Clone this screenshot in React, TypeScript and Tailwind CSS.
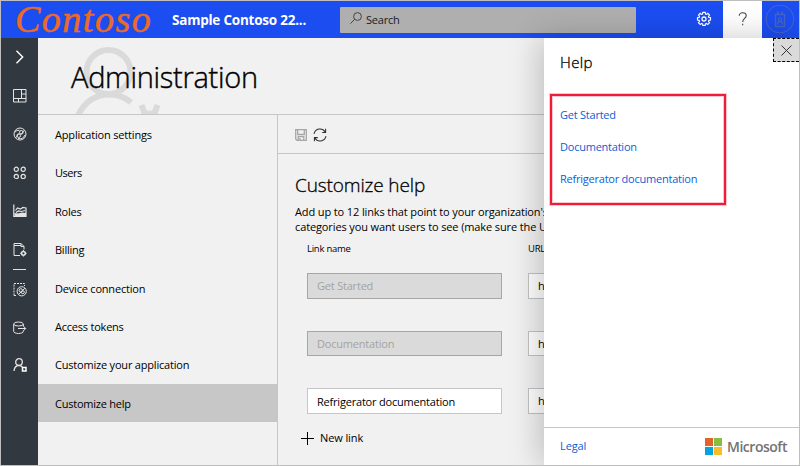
import React from "react";

const navItems = [
  { label: "Application settings", track: "tracking-[-0.17px]" },
  { label: "Users", track: "tracking-[-0.5px]" },
  { label: "Roles", track: "tracking-[-0.2px]" },
  { label: "Billing", track: "tracking-[-0.25px]" },
  { label: "Device connection", track: "tracking-[-0.2px]" },
  { label: "Access tokens", track: "tracking-[-0.22px]" },
  { label: "Customize your application", track: "tracking-[-0.2px]" },
  { label: "Customize help", track: "tracking-[-0.23px]" },
];

const rows = [
  { name: "Get Started", locked: true },
  { name: "Documentation", locked: true },
  { name: "Refrigerator documentation", locked: false },
];

function Stroke({ children, size = 14, className = "" }: { children: React.ReactNode; size?: number; className?: string }) {
  return (
    <svg width={size} height={size} viewBox={`0 0 ${size} ${size}`} fill="none" stroke="currentColor" strokeWidth="1" className={className}>
      {children}
    </svg>
  );
}

function Sidebar() {
  return (
    <nav className="flex w-[37px] shrink-0 flex-col items-center bg-[#32383f] text-[#e4e4e4]">
      <div className="flex h-[38px] items-center">
        <Stroke>
          <path d="M3.500 .8 9.700 7 3.500 13.200" strokeWidth="1.400" stroke="#fff" />
        </Stroke>
      </div>
      <div className="flex h-[39px] items-center">
        <Stroke>
          <path d="M.5 .5h12.500v12.500H.5zM.5 9.500h12.500M8.500 .5v9M8.500 5h4.500M5.500 9.500v3.500" />
        </Stroke>
      </div>
      <div className="flex h-[38px] items-center">
        <Stroke>
          <circle cx="7" cy="7" r="6" />
          <path d="M2.500 11 6.200 6.300M11.500 3 7.800 7.700M2 5A5 5 0 0 1 6.500 3.200M5 11.500A6 6 0 0 0 12 8" />
          <circle cx="8.300" cy="5.300" r="1.800" />
          <circle cx="5.700" cy="8.700" r="1.800" />
        </Stroke>
      </div>
      <div className="flex h-[39px] items-center">
        <Stroke>
          <circle cx="3.300" cy="3.300" r="2.100" strokeWidth="1.200" />
          <circle cx="10.200" cy="3.300" r="2.100" strokeWidth="1.200" />
          <circle cx="3.300" cy="10.400" r="2.100" strokeWidth="1.200" />
          <circle cx="10.200" cy="10.400" r="2.100" strokeWidth="1.200" />
        </Stroke>
      </div>
      <div className="flex h-[38px] items-center">
        <Stroke>
          <path d="M.8 .5v12h12.200V3.500M2.500 6.500l2-2.500 3 1 2.500-1.500 3 .5M3 8.500l2.500-1.500 3 .5 3.500-1" strokeWidth="1.200" />
          <path d="M1.500 12.500V9l3.500.5 4-1 4 .5v3.500z" fill="currentColor" stroke="none" />
        </Stroke>
      </div>
      <div className="flex h-[39px] items-center">
        <Stroke>
          <path d="M7 12.500H1V.5h7l3 3v3M8 .5v3h3M1 2.500h7" />
          <circle cx="10.400" cy="10.300" r="1.900" strokeWidth="1.500" />
          <path d="M10.400 7v6.600M7.100 10.300h6.600" strokeDasharray="1.200 4.200" />
        </Stroke>
      </div>
      <div className="h-px w-[13px] bg-[#e0e0e0]" />
      <div className="flex h-[39px] items-center">
        <Stroke>
          <path d="M1 12.500V.5h10.500v2.500M1 12.500h3" strokeDasharray="2 1" />
          <circle cx="8.700" cy="8.300" r="4.600" />
          <path d="m5.500 11.400 6.400-6.200" />
          <circle cx="7.800" cy="7.400" r="1.700" />
          <circle cx="9.800" cy="9.200" r="1.500" />
        </Stroke>
      </div>
      <div className="flex h-[37px] items-center">
        <Stroke>
          <ellipse cx="5.500" cy="3" rx="4.800" ry="2" />
          <path d="M.7 3v7.500c0 1.100 2.100 2 4.800 2s4.800-.9 4.800-2v-.6M10.300 3v2M5 7.500h7.700M10 4.800l2.700 2.700-2.700 2.700" />
        </Stroke>
      </div>
      <div className="flex h-[38px] items-center">
        <Stroke>
          <circle cx="6" cy="4" r="3.300" strokeWidth="1.300" />
          <path d="M1 13c.3-3.400 2-5.500 5-5.500 1.500 0 2.500.5 3.300 1.500" strokeWidth="1.300" />
          <path d="M9.500 9.500h3.500v3.500H9.500z" strokeWidth="1.500" stroke="#fff" />
        </Stroke>
      </div>
    </nav>
  );
}

function Header() {
  return (
    <header className="flex h-[37px] shrink-0 items-center bg-[#1b4df1]">
      <div className="w-[171px] pl-[14px] font-['Liberation_Serif',serif] text-[38px] leading-[37px] tracking-[1.500px] text-[#ed6a25] italic [-webkit-text-stroke:0.5px_#ed6a25]">
        Contoso
      </div>
      <div className="w-[168px] pt-[2px] text-[13.500px] font-bold tracking-[-0.230px] whitespace-nowrap text-white">
        Sample Contoso 22...
      </div>
      <div className="flex h-[26px] w-[296px] items-center rounded-[1px] bg-[#afafaf] pt-px pl-[10px] text-[11px] tracking-[-0.200px] text-[#1c1c1c]">
        <Stroke size={12} className="mr-[4px] mb-[4px] text-[#444]">
          <circle cx="7.500" cy="4.500" r="3.900" />
          <path d="M4.700 7.300.4 11.600" />
        </Stroke>
        Search
      </div>
      <svg width="16" height="16" viewBox="-8 -8 16 16" fill="none" stroke="#fff" strokeWidth="1.300" className="mb-[2px] ml-[60px]">
        <circle r="2" />
        <path d="M-1.200-6h2.400l.3 1.600 .9.400 1.400-1 1.700 1.700-1 1.400.4.900 1.600.3v2.400l-1.600.3-.4.900 1 1.400-1.700 1.700-1.400-1-.9.400-.3 1.600h-2.400l-.3-1.600-.9-.4-1.400 1-1.700-1.700 1-1.400-.4-.9-1.600-.3v-2.400l1.600-.3.400-.9-1-1.400 1.700-1.700 1.400 1 .9-.4z" transform="translate(0 -.6)" strokeWidth="1.200" />
      </svg>
      <div className="ml-[11px] flex h-[37px] w-[39px] items-center justify-center bg-white">
        <svg width="10" height="14" viewBox="0 0 10 14" fill="none" stroke="#444" strokeWidth="1.100" className="mb-[2px]">
          <path d="M1.200 3.800C1.200 2 2.700.8 4.700.8s3.500 1.100 3.500 2.900C8.200 6.400 4.700 6.600 4.700 10M4.700 11.800v1.400" />
        </svg>
      </div>
      <svg width="30" height="30" viewBox="0 0 30 30" fill="none" stroke="#4663c4" strokeWidth="1.100" className="mb-[2px] ml-[3px]">
        <circle cx="15" cy="15" r="13.700" />
        <path d="M10.500 10.500h9v12h-9zM12.500 7.500l1 3M17.500 7.500l-1 3M12.500 20.500c0-4 5-4 5 0" strokeWidth="1.500" />
        <circle cx="15" cy="15.500" r="1.600" />
      </svg>
    </header>
  );
}

function Title() {
  return (
    <div className="relative h-[77px] shrink-0 overflow-hidden border-b border-[#c6c6c6]">
      <svg width="140" height="76" viewBox="38 38 140 76" fill="none" stroke="#dadada" strokeWidth="6" className="absolute top-0 left-0">
        <circle cx="108.500" cy="72" r="22" />
        <path d="M77 119A33.500 33.500 0 0 1 131 102.500" />
        <path d="m141.500 105 3 8M157.500 105l-3 8" />
        <path d="M139 124a10.500 10.500 0 0 1 21 0" />
      </svg>
      <h1 className="relative pt-[19px] pl-[33px] text-[29px] leading-[40px] font-light tracking-[-0.280px] [-webkit-text-stroke:0.4px_black]">
        Administration
      </h1>
    </div>
  );
}

function HelpForm() {
  return (
    <main className="min-w-0 flex-1 overflow-hidden">
      <div className="flex h-[39px] items-center border-b border-[#c6c6c6] pt-[2px] pl-[17px]">
        <Stroke size={12} className="text-[#a6a6a6]">
          <path d="M.7 .7h10.600v10.600H2L.7 10zM2.700 1v4.500h6.600V1M3.200 11V7.700h5.600V11M5 9v2" strokeWidth="1.300" />
        </Stroke>
        <Stroke size={14} className="ml-[6px] text-[#333]">
          <path d="M1 5.800A6.100 6.100 0 0 1 12.200 4M13 8.200A6.100 6.100 0 0 1 1.800 10M12.600 .8v3.600H9.200M1.400 13.200V9.600h3.400" strokeWidth="1.050" />
        </Stroke>
      </div>
      <div className="w-[520px] pl-[17px]">
        <h2 className="mt-[18px] text-[19px] leading-[26px] font-light tracking-[-0.120px] [-webkit-text-stroke:0.3px_black]">Customize help</h2>
        <div className="mt-[6px] text-[11px] leading-[15px] tracking-[-0.120px] whitespace-nowrap">
          <p>Add up to 12 links that point to your organization's</p>
          <p>categories you want users to see (make sure the URLs</p>
        </div>
        <div className="mt-[8px] flex text-[9.500px] leading-[14px] tracking-[-0.250px]">
          <span className="w-[233px] pl-[12px]">Link name</span>
          <span>URL</span>
        </div>
        <div className="mt-[17px] flex flex-col gap-[32px] pl-[12px] text-[11px] tracking-[-0.2px]">
          {rows.map((row) => (
            <div key={row.name} className="flex h-[25.700px] gap-[26px]">
              <div
                className={
                  row.locked
                    ? "flex w-[195px] items-center border border-[#a6a6a6] bg-[#dadada] pt-px pl-[9px] text-[#a3a3a3]"
                    : "flex w-[195px] items-center border border-[#c6c6c6] bg-white pt-[2px] pl-[9px]"
                }
              >
                {row.name}
              </div>
              <div className="flex w-[195px] items-center border border-[#c2c2c2] bg-white pt-px pl-[9px]">https://docs.microsoft.com</div>
            </div>
          ))}
        </div>
        <div className="mt-[15px] flex items-center pl-[6px] text-[11px] leading-[18px] tracking-[-0.1px]">
          <Stroke size={13} className="mr-[6px]">
            <path d="M6.500 0v13M0 6.500h13" />
          </Stroke>
          New link
        </div>
      </div>
    </main>
  );
}

function HelpPanel() {
  return (
    <aside className="absolute top-[37px] right-0 bottom-0 flex w-[255px] flex-col bg-white shadow-[-4px_0_30px_rgba(0,0,0,0.22)]">
      <div className="flex h-[56px] justify-between pl-[16px]">
        <h3 className="pt-[14px] text-[15px] leading-[20px] font-light tracking-[0.350px] [-webkit-text-stroke:0.3px_black]">Help</h3>
        <button className="flex h-[24px] w-[26px] items-center justify-center border border-r-0 border-dashed border-black bg-[#dadada]">
          <Stroke size={11} className="text-[#333]">
            <path d="m.5.5 10 10M10.500.5l-10 10" />
          </Stroke>
        </button>
      </div>
      <div className="ml-[6px] flex h-[111px] w-[176px] flex-col border-2 border-[#ef1c3a] pt-[3px] pl-[8px] text-[11px] leading-[32px] tracking-[-0.230px] text-[#0a60d6] shadow-[0_0_0_1px_#f9c6cd,inset_0_0_0_1px_#f9c6cd]">
        <a>Get Started</a>
        <a>Documentation</a>
        <a>Refrigerator documentation</a>
      </div>
      <div className="mt-auto flex h-[38px] items-center justify-between border-t border-[#c6c6c6] pr-[12px] pl-[16px]">
        <a className="text-[11px] tracking-[-0.1px] text-[#0a60d6]">Legal</a>
        <div className="flex items-center gap-[5px]">
          <div className="grid grid-cols-2 gap-px">
            <span className="size-2 bg-[#e2622b]" />
            <span className="size-2 bg-[#86bf40]" />
            <span className="size-2 bg-[#05a3de]" />
            <span className="size-2 bg-[#fabd27]" />
          </div>
          <span className="text-[14px] font-semibold tracking-[-0.480px] text-[#737373]">Microsoft</span>
        </div>
      </div>
    </aside>
  );
}

export default function App() {
  return (
    <div className="h-[466px] w-[800px] border border-[#bfbfbf] bg-[#f1f1f1] font-['Open_Sans',sans-serif] text-black">
      <div className="relative flex h-full flex-col overflow-hidden">
        <Header />
        <div className="flex min-h-0 flex-1">
          <Sidebar />
          <div className="flex min-w-0 flex-1 flex-col">
            <Title />
            <div className="flex min-h-0 flex-1">
              <ul className="w-[240px] shrink-0 border-r border-[#c6c6c6] text-[11px]">
                {navItems.map((item) => (
                  <li
                    key={item.label}
                    className={
                      item.label === "Customize help"
                        ? `flex h-[38.400px] items-center bg-[#c7c7c7] pt-[3px] pl-[17px] ${item.track}`
                        : `flex h-[38.400px] items-center pt-[2px] pl-[17px] ${item.track}`
                    }
                  >
                    {item.label}
                  </li>
                ))}
              </ul>
              <HelpForm />
            </div>
          </div>
        </div>
        <HelpPanel />
      </div>
    </div>
  );
}
